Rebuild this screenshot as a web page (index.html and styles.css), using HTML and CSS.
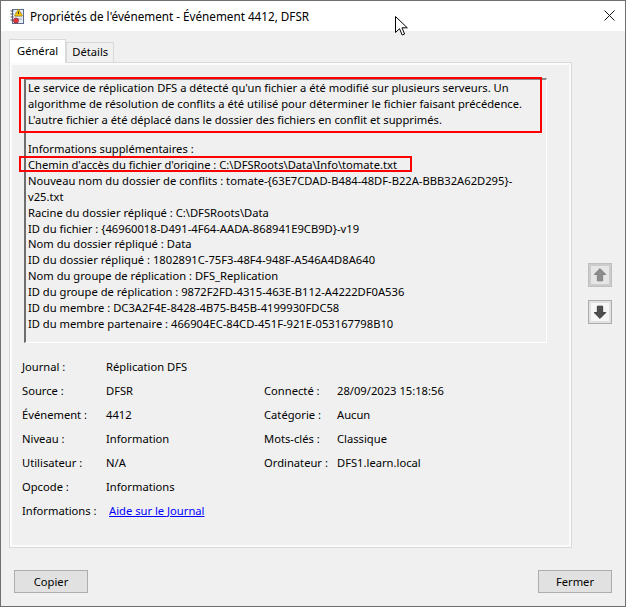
FILE: index.html
```html
<!DOCTYPE html>
<html lang="fr">
<head>
  <meta charset="UTF-8" />
  <title>Propriétés de l'événement - Événement 4412, DFSR</title>
  <link rel="stylesheet" href="styles.css">
</head>
<body>
  <div class="window">
    <div class="titlebar">
      <svg class="app-icon" width="14" height="16" viewBox="0 0 14 16">
        <rect x="2.5" y="1.5" width="11" height="14" fill="#e8ecf4" stroke="#5a6b8c"/>
        <line x1="5" y1="5" x2="12" y2="5" stroke="#9aa6c0"/>
        <line x1="5" y1="8" x2="12" y2="8" stroke="#9aa6c0"/>
        <line x1="5" y1="11" x2="12" y2="11" stroke="#9aa6c0"/>
        <g stroke="#4a4a4a">
          <line x1="0.5" y1="3" x2="3.5" y2="3"/>
          <line x1="0.5" y1="6" x2="3.5" y2="6"/>
          <line x1="0.5" y1="9" x2="3.5" y2="9"/>
          <line x1="0.5" y1="12" x2="3.5" y2="12"/>
        </g>
        <path d="M8.5 1 L12.5 8 H4.5 Z" fill="#f5c400" stroke="#a07c00" stroke-width="0.6"/>
        <rect x="8" y="3.5" width="1" height="2.5" fill="#333"/>
        <circle cx="6" cy="12.5" r="2.6" fill="#d9363e" stroke="#8c1c22" stroke-width="0.6"/>
      </svg>
      <span class="title">Propriétés de l'événement - Événement 4412, DFSR</span>
      <svg class="close" width="11" height="11" viewBox="0 0 11 11">
        <path d="M0.5 0.5 L10.5 10.5 M10.5 0.5 L0.5 10.5" stroke="#111" stroke-width="1"/>
      </svg>
      <svg class="cursor" width="13" height="20" viewBox="0 0 13 20">
        <path d="M0.5 0.5 V16.5 L4.5 12.7 L7.2 19 L9.6 18 L7 11.8 H12.3 Z" fill="#fff" stroke="#000" stroke-width="1" stroke-linejoin="miter"/>
      </svg>
    </div>

    <div class="main">
      <div class="tab-area">
        <div class="tabs">
          <div class="tab active">Général</div>
          <div class="tab">Détails</div>
        </div>
        <div class="panel">
          <div class="textbox">
            <div class="desc">Le service de réplication DFS a détecté qu'un fichier a été modifié sur plusieurs serveurs. Un
algorithme de résolution de conflits a été utilisé pour déterminer le fichier faisant précédence.
L'autre fichier a été déplacé dans le dossier des fichiers en conflit et supprimés.</div>
            <div class="extra">Informations supplémentaires :
Chemin d'accès du fichier d'origine : C:\DFSRoots\Data\Info\tomate.txt
Nouveau nom du dossier de conflits : tomate-{63E7CDAD-B484-48DF-B22A-BBB32A62D295}-
v25.txt
Racine du dossier répliqué : C:\DFSRoots\Data
ID du fichier : {46960018-D491-4F64-AADA-868941E9CB9D}-v19
Nom du dossier répliqué : Data
ID du dossier répliqué : 1802891C-75F3-48F4-948F-A546A4D8A640
Nom du groupe de réplication : DFS_Replication
ID du groupe de réplication : 9872F2FD-4315-463E-B112-A4222DF0A536
ID du membre : DC3A2F4E-8428-4B75-B45B-4199930FDC58
ID du membre partenaire : 466904EC-84CD-451F-921E-053167798B10</div>
            <div class="mark mark-desc"></div>
            <div class="mark mark-path"></div>
          </div>

          <div class="props">
            <span>Journal :</span><span class="wide">Réplication DFS</span>
            <span>Source :</span><span>DFSR</span><span>Connecté :</span><span>28/09/2023 15:18:56</span>
            <span>Événement :</span><span>4412</span><span>Catégorie :</span><span>Aucun</span>
            <span>Niveau :</span><span>Information</span><span>Mots-clés :</span><span>Classique</span>
            <span>Utilisateur :</span><span>N/A</span><span>Ordinateur :</span><span>DFS1.learn.local</span>
            <span>Opcode :</span><span class="wide">Informations</span>
            <span>Informations :</span><span class="wide"><a href="#" class="help">Aide sur le Journal</a></span>
          </div>
        </div>
      </div>

      <div class="side">
        <div class="nav-btn disabled">
          <svg width="15" height="15" viewBox="0 0 15 15"><path d="M7.5 1.5 L13 7 H10 V13 H5 V7 H2 Z" fill="#8d8d8d" stroke="#7a7a7a" stroke-width="0.8"/></svg>
        </div>
        <div class="nav-btn">
          <svg width="15" height="15" viewBox="0 0 15 15"><path d="M7.5 13.5 L13 8 H10 V2 H5 V8 H2 Z" fill="#4e4e4e" stroke="#333" stroke-width="0.8"/></svg>
        </div>
      </div>
    </div>

    <div class="footer">
      <button class="btn">Copier</button>
      <button class="btn">Fermer</button>
    </div>
  </div>
</body>
</html>
```

FILE: styles.css
```css
* { box-sizing: border-box; }
body {
  margin: 0;
  background: #f0f0f0;
  font-family: 'Noto Sans', 'Open Sans', sans-serif;
  font-size: 11.2px;
  color: #000;
}
.window {
  width: 626px;
  height: 607px;
  border: 1px solid #707070;
  background: #f0f0f0;
  display: flex;
  flex-direction: column;
}
.titlebar {
  position: relative;
  height: 30px;
  background: #fff;
  display: flex;
  align-items: center;
  padding-left: 9px;
}
.app-icon {
  margin-right: 6px;
  margin-top: -1px;
}
.title {
  font-size: 11.7px;
  line-height: 16px;
}
.close {
  margin-left: auto;
  margin-right: 10px;
  margin-top: -1px;
}
.cursor {
  position: absolute;
  left: 394px;
  top: 15px;
}
.main {
  display: flex;
  padding: 8px 0 0 8px;
}
.tab-area {
  width: 563px;
}
.tabs {
  display: flex;
  align-items: flex-end;
  height: 23px;
}
.tab {
  height: 20px;
  padding: 0 5px;
  border: 1px solid #d9d9d9;
  border-bottom: none;
  background: #f0f0f0;
  line-height: 18px;
}
.tab.active {
  height: 24px;
  margin-bottom: -1px;
  padding: 0 7px;
  background: #fff;
  line-height: 22px;
  position: relative;
  z-index: 1;
}
.panel {
  height: 486px;
  border: 1px solid #d9d9d9;
  box-shadow: inset 0 0 0 2px #fbfbfb;
  padding-top: 15px;
}
.textbox {
  position: relative;
  width: 523px;
  height: 265px;
  margin-left: 14px;
  border-top: 2px solid #8a8a8a;
  border-left: 2px solid #6e6e6e;
  border-right: 1px solid #fff;
  border-bottom: 1px solid #fff;
  padding: 0 2px;
  line-height: 16px;
}
.desc, .extra {
  white-space: pre-line;
}
.extra {
  margin-top: 13px;
  line-height: 15.9px;
}
.mark {
  position: absolute;
  border: 2px solid #ff0000;
}
.mark-desc {
  left: -7px;
  top: -3px;
  width: 523px;
  height: 56px;
}
.mark-path {
  left: -7px;
  top: 76px;
  width: 393px;
  height: 16px;
}
.props {
  display: grid;
  grid-template-columns: 84px 158px 73px auto;
  grid-auto-rows: 24px;
  align-items: center;
  margin-top: 11px;
  padding-left: 12px;
}
.props .wide { grid-column: 2 / 5; }
.help {
  color: #0000ff;
  margin-left: 3px;
}
.side {
  margin-left: 16px;
  padding-top: 224px;
  display: flex;
  flex-direction: column;
  gap: 13px;
}
.nav-btn {
  width: 24px;
  height: 24px;
  border: 1px solid #adadad;
  background: #e1e1e1;
  display: flex;
  align-items: center;
  justify-content: center;
}
.nav-btn svg {
  background: #f6f6f6;
  padding: 1px;
  width: 18px;
  height: 18px;
}
.nav-btn.disabled {
  border-color: #bfbfbf;
  background: #cccccc;
}
.nav-btn.disabled svg { background: #e6e6e6; }
.footer {
  display: flex;
  justify-content: space-between;
  padding: 22px 13px 0;
}
.btn {
  width: 74px;
  height: 23px;
  border: 1px solid #adadad;
  background: #e1e1e1;
  font-family: inherit;
  font-size: 11.2px;
  color: #000;
  padding: 0;
}
```
